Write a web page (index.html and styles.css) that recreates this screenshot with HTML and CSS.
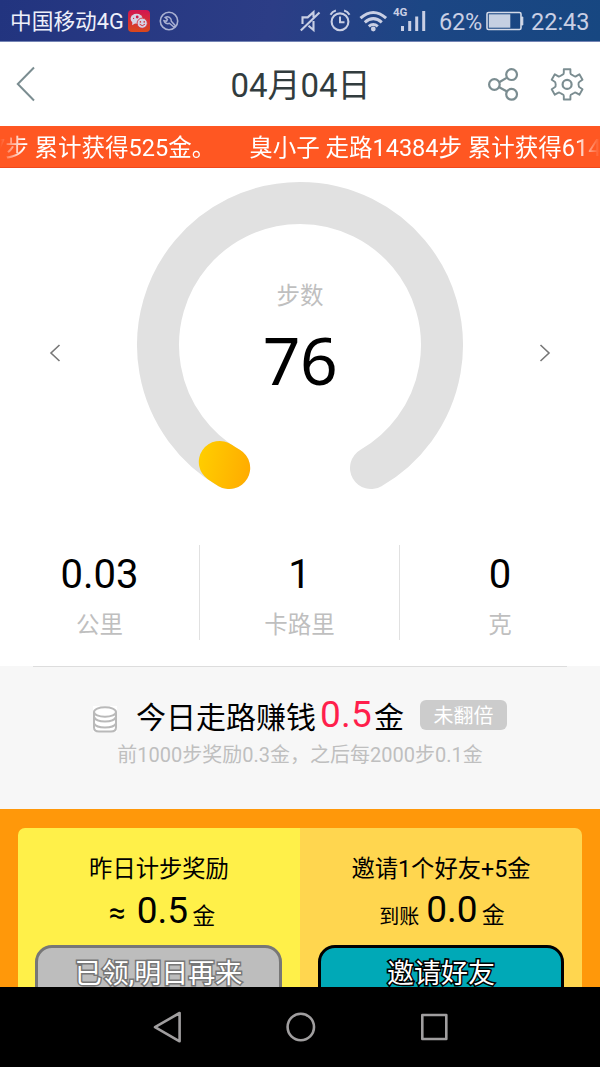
FILE: index.html
```html
<!DOCTYPE html>
<html lang="zh-CN">
<head>
<meta charset="utf-8">
<title>04月04日</title>
<link rel="stylesheet" href="styles.css">
</head>
<body>
<div class="status">
  <span class="carrier">中国移动4G</span>
  <svg class="app-icon" width="22" height="22" viewBox="0 0 22 22">
    <defs><linearGradient id="app" x1="0" y1="0" x2="0" y2="1"><stop offset="0" stop-color="#d21552"/><stop offset="1" stop-color="#d9481b"/></linearGradient></defs>
    <rect width="22" height="22" rx="4" fill="url(#app)"/>
    <path d="M4.500 11l-.4 4.200 3.300-2z" fill="#d5d3e6"/>
    <ellipse cx="8.600" cy="8.800" rx="6" ry="5" fill="#d5d3e6"/>
    <circle cx="9.200" cy="7" r="1.400" fill="#d21d4a"/>
    <circle cx="5.600" cy="8.400" r=".6" fill="#d21d4a"/>
    <circle cx="14.200" cy="13.200" r="5.100" fill="#d5d3e6" stroke="#d4303a" stroke-width=".9"/>
    <circle cx="12.400" cy="11.900" r=".8" fill="#d4303a"/><circle cx="16.200" cy="11.900" r=".8" fill="#d4303a"/>
    <path d="M11.600 14.200q2.700 3 5.300 0" fill="none" stroke="#d4303a" stroke-width="1"/>
  </svg>
  <svg class="tool-icon" width="20" height="20" viewBox="0 0 20 20" fill="none" stroke="#aab1d2" stroke-width="1.400">
    <circle cx="10" cy="10" r="8.700" stroke-width="1.600"/>
    <path d="M6.200 6.400l2.200 2-.8 1.800-2.600-.5a4 4 0 0 0 5.400 2.600l4.400 3.700 1.400-1.500-3.900-4.300a4 4 0 0 0-6.100-3.800z" stroke-width="1.500"/>
  </svg>
  <svg class="signals" width="140" height="36" viewBox="296 0 140 36" fill="none" stroke="#c9cfe4" stroke-width="1.800">
    <path d="M302.500 24v-6.600h5.200l5.800-5.200v5M313.500 21v9l-5-4.200M300.800 30.600L319.500 12.500" stroke-width="2.100"/>
    <circle cx="340" cy="21.800" r="8.400" stroke-width="2.100"/>
    <path d="M340 16.500v5.800h4.500M330.500 14.700q1.800-3.300 5.400-4.200M349.500 14.700q-1.800-3.300-5.400-4.200" stroke-width="2"/>
    <g stroke-width="3"><path d="M360.500 18.200q12.800-11.500 25.600 0M364.800 22.300q8.500-7.400 17 0M368.800 26.400q4.500-3.800 9 0"/></g>
    <circle cx="373.300" cy="29" r="2.400" fill="#c9cfe4" stroke="none"/>
    <path d="M402.500 26v5M409.700 21v10M416.700 16.500v14.500M423.700 11v20" stroke-width="3"/>
  </svg>
  <span class="net">4G</span>
  <span class="percent">62%</span>
  <svg class="battery" width="38" height="20" viewBox="0 0 38 20">
    <rect x="1" y="1.500" width="34" height="17" rx="1.500" fill="none" stroke="#d4dae8" stroke-width="1.600"/>
    <rect x="2.800" y="3.300" width="21.500" height="13.400" fill="#c5d0e2"/>
    <path d="M35.500 6h1.300v8h-1.300z" fill="#d4dae8" stroke="#d4dae8" stroke-width="1"/>
  </svg>
  <span class="clock">22:43</span>
</div>

<header class="header">
  <svg class="back" width="22" height="36" viewBox="0 0 22 36"><path d="M19 1.500L2.800 18 19 34.500" fill="none" stroke="#7b8d91" stroke-width="2"/></svg>
  <h1 class="title">04月04日</h1>
  <svg class="tools" width="100" height="40" viewBox="486 63 100 40" fill="none" stroke="#7b8d91" stroke-width="2.200">
    <path d="M499.200 81.200l7.400-4.300M499.200 86.200l7.400 4.100"/>
    <circle cx="494.400" cy="83.500" r="5.300"/><circle cx="511.600" cy="73.600" r="5.400"/><circle cx="511.600" cy="93.300" r="5.400"/>
    <g stroke-width="1.900" stroke-linejoin="round"><path d="M563.800 68.300h6.600v3.800q0 1.300 1.600 1.800l2 1.100q1.200.8 2.200.1l3.200-1.800 3.100 5.500-3 1.900q-1.200.8-1 2.800t1 2.800l3 1.900-3.100 5.500-3.200-1.800q-1-.7-2.200.1l-2 1.100q-1.600.5-1.600 1.800v3.600h-6.600v-3.600q0-1.300-1.600-1.800l-2-1.100q-1.200-.8-2.200-.1l-3.200 1.800-3.100-5.500 3-1.900q1.200-.8 1-2.800t-1-2.800l-3-1.900 3.100-5.500 3.200 1.800q1 .7 2.200-.1l2-1.100q1.600-.5 1.600-1.800z"/><circle cx="567.100" cy="83.400" r="4.500" stroke-width="2.200"/></g>
  </svg>
</header>

<div class="marquee">
  <div class="marquee-track"><span class="first">7步 累计获得525金。</span><span>臭小子 走路14384步 累计获得614</span></div>
</div>

<main class="content">
  <section class="gauge-row">
    <svg class="arrow" width="14" height="20" viewBox="0 0 14 20"><path d="M11.500 2L3 10l8.500 8" fill="none" stroke="#777" stroke-width="1.600"/></svg>
    <div class="gauge">
      <svg class="ring" width="330" height="330" viewBox="135 180 330 330" fill="none" stroke-width="42" stroke-linecap="round">
        <defs><linearGradient id="gold" gradientUnits="userSpaceOnUse" x1="199" y1="460" x2="250" y2="470"><stop offset="0" stop-color="#ffcd00"/><stop offset="1" stop-color="#ffac00"/></linearGradient></defs>
        <path d="M229 468A142 142 0 1 1 371 468" stroke="#e1e1e1"/>
        <path d="M229.200 468A142 142 0 0 1 219.800 462" stroke="url(#gold)"/>
      </svg>
      <div class="reading"><span class="reading-label">步数</span><span class="reading-value">76</span></div>
    </div>
    <svg class="arrow" width="14" height="20" viewBox="0 0 14 20"><path d="M2.500 2L11 10l-8.500 8" fill="none" stroke="#777" stroke-width="1.600"/></svg>
  </section>

  <section class="stats">
    <div class="stat"><b class="num">0.03</b><span class="unit">公里</span></div>
    <div class="stat"><b class="num">1</b><span class="unit">卡路里</span></div>
    <div class="stat"><b class="num">0</b><span class="unit">克</span></div>
  </section>

  <section class="earn">
    <div class="earn-line">
      <svg class="coins" width="24" height="28" viewBox="0 0 24 28"><path d="M0 0h24v26H0z" fill="#fff"/><g fill="none" stroke="#b9b9b9" stroke-width="2"><ellipse cx="12" cy="6" rx="11" ry="4.800"/><path d="M1 6v15.500q0 4 5 4h12q5 0 5-4V6M1 11q2 4.500 11 4.500T23 11M1 17.500q2 4 11 4t11-4"/></g></svg>
      <span class="earn-text">今日走路赚钱</span><span class="earn-num">0.5</span><span class="earn-text">金</span>
      <span class="badge">未翻倍</span>
    </div>
    <p class="rule">前1000步奖励0.3金，之后每2000步0.1金</p>
  </section>

  <section class="rewards">
    <div class="card yesterday">
      <div class="card-title">昨日计步奖励</div>
      <div class="amount low"><span class="approx">≈</span><span class="big">0.5</span><span class="gold-unit">金</span></div>
      <div class="button claimed">已领,明日再来</div>
    </div>
    <div class="card invite">
      <div class="card-title">邀请1个好友+5金</div>
      <div class="amount"><span class="arrived">到账</span><span class="big">0.0</span><span class="gold-unit">金</span></div>
      <div class="button go">邀请好友</div>
    </div>
  </section>
</main>

<nav class="navbar">
  <svg width="600" height="80" viewBox="0 987 600 80" fill="none" stroke="#a09e9f" stroke-width="2.600" stroke-linejoin="round">
    <path d="M179.600 1013v28.300L155 1027.200z"/><circle cx="300.800" cy="1027" r="13.200"/><rect x="422.300" y="1015" width="24" height="24"/>
  </svg>
</nav>
</body>
</html>
```
FILE: styles.css
```css
* { box-sizing: border-box; }
body {
  margin: 0;
  width: 600px;
  height: 1067px;
  overflow: hidden;
  display: flex;
  flex-direction: column;
  background: #fff;
  color: #000;
  font-family: Roboto, "Noto Sans CJK SC", sans-serif;
}
svg { display: block; flex: none; }
span, b { white-space: nowrap; }

.status {
  height: 42px;
  flex: none;
  display: flex;
  align-items: flex-start;
  background: linear-gradient(100deg, #22347f 0%, #2c3d86 45%, #1c4684 70%, #174781 100%);
  border-bottom: 1px solid #7484b4;
  color: #c9cfe4;
  line-height: 30px;
}
.carrier { width: 118px; margin: 7px 0 0 10px; font-size: 21.7px; color: #eef0fa; }
.app-icon { margin-top: 10px; }
.tool-icon { margin: 11px 0 0 9px; }
.signals { margin-left: 117px; }
.net { width: 18px; margin: 4px 0 0 -43px; font-size: 11.500px; font-weight: 700; line-height: 16px; }
.percent { width: 47px; margin: 7px 0 0 28px; font-size: 23.500px; letter-spacing: -.2px; }
.battery { margin: 11px 0 0 0; }
.clock { margin: 7px 0 0 7px; font-size: 23.500px; }

.header {
  height: 84px;
  flex: none;
  display: flex;
  align-items: center;
  justify-content: space-between;
  padding: 0 14px 1px 15px;
}
.back { margin-right: 78px; }
.title { margin: 5px 0 0; font-size: 33px; line-height: 48px; font-weight: 400; color: #323c3e; }

.marquee {
  height: 42px;
  flex: none;
  overflow: hidden;
  background: #ff5722;
  border-bottom: 1px solid #f0481c;
  color: #fff;
}
.marquee-track {
  display: flex;
  gap: 34px;
  height: 42px;
  font-size: 23.500px;
  line-height: 44px;
  -webkit-mask-image: linear-gradient(90deg, transparent, #000 24px, #000 576px, transparent);
  mask-image: linear-gradient(90deg, transparent, #000 24px, #000 576px, transparent);
}
.first { margin-left: -8px; }

.content { flex: 1; min-height: 0; overflow: hidden; }
.gauge-row { height: 377px; display: flex; justify-content: space-between; padding: 12px 48px 0; }
.arrow { margin-top: 163px; }
.gauge { display: grid; }
.ring, .reading { grid-area: 1 / 1; }
.reading { display: flex; flex-direction: column; align-items: center; padding-top: 99px; }
.reading-label { font-size: 23.500px; line-height: 34px; color: #bfbfbf; }
.reading-value { font-family: "Noto Sans", sans-serif; font-size: 66px; line-height: 80px; margin-top: 6px; letter-spacing: -.5px; }

.stats { height: 95px; display: flex; }
.stat { width: 200px; padding-top: 5px; display: flex; flex-direction: column; align-items: center; border-right: 1px solid #e1e1e1; }
.stat:last-child { border-right: 0; }
.num { font-size: 40px; line-height: 50px; font-weight: 400; }
.unit { margin-top: 8px; font-size: 23.500px; line-height: 34px; color: #bfbfbf; }

.earn {
  height: 143px;
  margin-top: 26px;
  background: linear-gradient(#ddd, #ddd) center top / 534px 1px no-repeat, #f7f7f7;
}
.earn-line { display: flex; align-items: flex-start; padding: 29px 0 0 93px; }
.coins { margin: 11px 19px 0 0; }
.earn-text { font-size: 30px; line-height: 46px; }
.earn-num { margin: -3px 2px 0 4px; font-size: 37px; line-height: 46px; letter-spacing: .2px; color: #ff1f4c; }
.badge { width: 87px; height: 30px; margin: 5px 0 0 16px; border-radius: 6px; background: #ccc; color: #fff; font-size: 20px; line-height: 32px; text-align: center; }
.rule { margin: -1px 0 0; font-size: 20px; line-height: 30px; text-align: center; color: #bfbfbf; }

.rewards { height: 260px; display: flex; padding: 19px 18px 0; background: #ff980a; }
.card { width: 282px; display: flex; flex-direction: column; align-items: center; }
.yesterday { background: #fff049; border-radius: 7px 0 0 0; }
.invite { background: #ffd64f; border-radius: 0 7px 0 0; }
.card-title { margin-top: 24px; font-size: 23.300px; line-height: 34px; }
.amount { height: 46px; display: flex; align-items: baseline; line-height: 46px; padding: 1px 0 0 2px; }
.low { padding: 2px 0 0 6px; }
.approx { font-size: 30px; margin-right: 11px; }
.arrived { font-size: 20px; margin-right: 7px; position: relative; top: 2px; }
.big { font-size: 37px; }
.gold-unit { font-size: 23px; margin-left: 4px; position: relative; top: 1px; }
.button { width: 247px; height: 70px; margin-top: 13px; border: 3px solid; border-radius: 17px; font-size: 27px; line-height: 53px; text-align: center; color: #fff; -webkit-text-stroke: 3px #000; paint-order: stroke fill; }
.claimed { margin-right: 1px; background: #bdbdbd; border-color: #777; -webkit-text-stroke-color: #777; }
.go { width: 246px; background: #00a9b7; border-color: #000; }

.navbar { height: 80px; flex: none; background: #000; }
```
